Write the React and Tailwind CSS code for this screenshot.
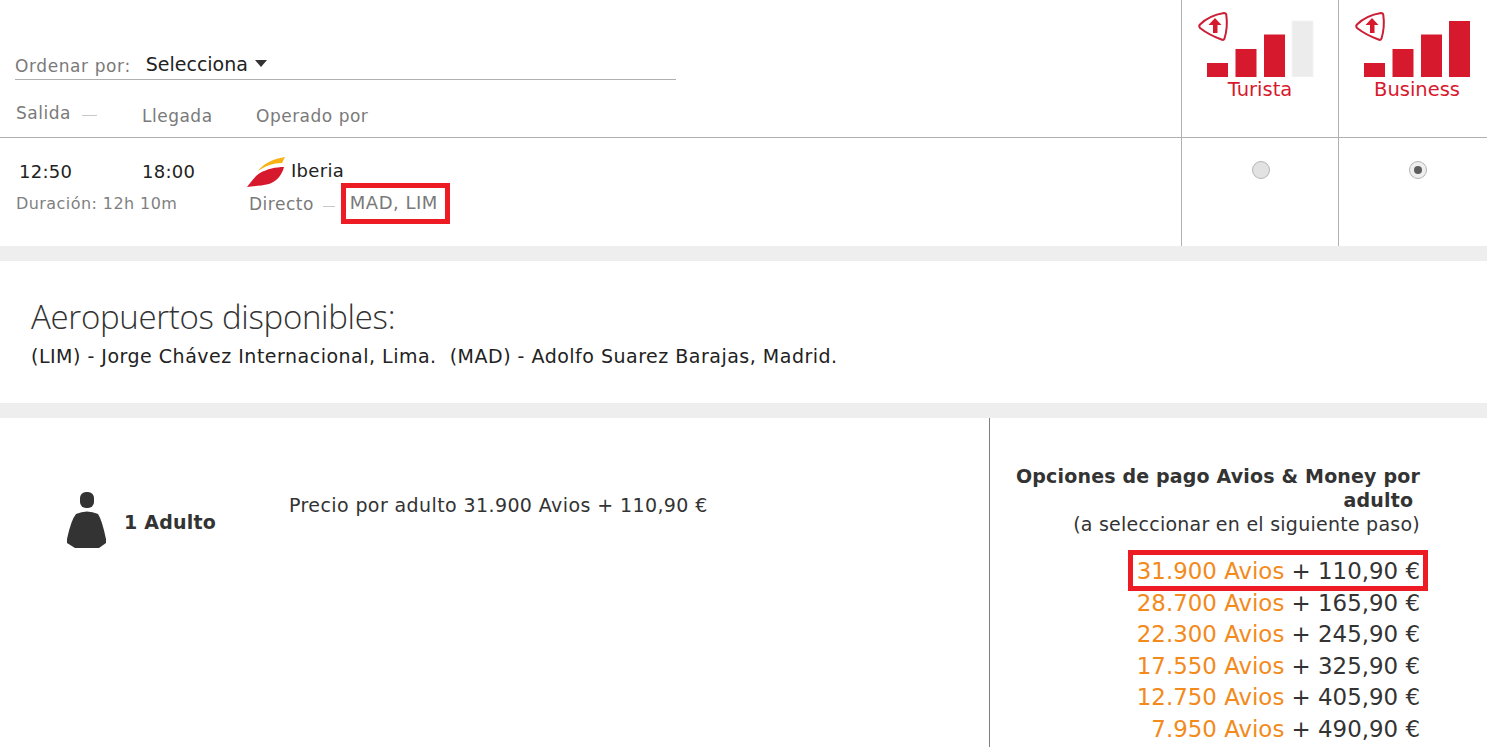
const FONT = "font-['DejaVu_Sans',sans-serif]"

const paymentOptions = [
  { avios: '31.900', money: '110,90', selected: true },
  { avios: '28.700', money: '165,90' },
  { avios: '22.300', money: '245,90' },
  { avios: '17.550', money: '325,90' },
  { avios: '12.750', money: '405,90' },
  { avios: '7.950', money: '490,90' },
]

function CabinIcon({ level }) {
  const bars = [
    { h: 14, x: 10 },
    { h: 28, x: 38.5 },
    { h: 42.5, x: 67 },
    { h: 56, x: 95 },
  ]
  return (
    <svg width="118" height="77" viewBox="0 0 118 77" className="block">
      <path
        d="M3 24.5 Q12 15.5 27 13 Q29 13 29.3 15 Q31 27 27.5 38.5 Q26.5 40.5 24.5 39.5 Q12 35 3 28 Q1.5 26 3 24.5 Z"
        fill="none"
        stroke="#cc1f36"
        strokeWidth="2"
      />
      <path d="M18 18 L24.5 25 L20.5 25 L20.5 33 L16 33 L16 25 L11.5 25 Z" fill="#d7192d" />
      {bars.map((b, i) => (
        <rect
          key={b.x}
          x={b.x}
          y={77 - b.h}
          width="21"
          height={b.h}
          fill={i < level ? '#d7192d' : '#ececec'}
          stroke={i < level ? 'none' : '#f3f3f3'}
        />
      ))}
    </svg>
  )
}

function Radio({ checked }) {
  return (
    <span
      className={`flex h-[18px] w-[18px] items-center justify-center rounded-full border border-[#b5b5b5] ${
        checked ? 'bg-[#efefef]' : 'bg-[#e2e2e2]'
      }`}
    >
      {checked && <span className="h-2 w-2 rounded-full bg-[#5e5e5e]" />}
    </span>
  )
}

function IberiaLogo() {
  return (
    <svg width="39" height="30" viewBox="0 0 39 30" className="block">
      <path d="M11 14 C16 7 25 2 38 0 C37 2 36 4 35 6 C26 6 18 9 11 14 Z" fill="#f9b214" />
      <path d="M37 10 C35 18 30 24 22 27 C14 29 6 29 0 30 C4 25 8 19 13 16 C20 12 29 10 37 10 Z" fill="#d7192d" />
    </svg>
  )
}

function PersonIcon() {
  return (
    <svg width="40" height="57" viewBox="0 0 40 57" className="block">
      <rect x="13" y="0" width="14" height="16" rx="6" fill="#333" />
      <path d="M9 22 Q20 17 31 22 Q35 28 39 47 L39 51 L32 56 L8 56 L0 51 L0 47 Q4 28 9 22 Z" fill="#333" />
    </svg>
  )
}

function CabinHead({ name, level, width }) {
  return (
    <div className={`flex shrink-0 flex-col border-l border-[#b0b0b0] pl-[15px] ${width}`}>
      <CabinIcon level={level} />
      <div className="mt-[1px] w-[126px] text-center text-[19.5px] leading-6 text-[#d7192d]">{name}</div>
    </div>
  )
}

export default function App() {
  return (
    <div className={`${FONT} h-[747px] overflow-hidden bg-white text-[#333]`}>
      {/* cabecera de la tabla */}
      <div className="flex h-[138px] border-b border-[#b0b0b0]">
        <div className="min-w-0 flex-1 pl-[15px]">
          <div className="mt-[49px] flex h-[31px] w-[661px] items-start border-b border-[#b0b0b0]">
            <span className="mt-[7px] text-[17px] leading-5 tracking-[0.6px] text-[#7a7a7a]">Ordenar por:</span>
            <span className="ml-[15px] text-[19px] leading-[30px] text-[#222]">Selecciona</span>
            <span className="ml-[7px] mt-[11px] h-0 w-0 border-x-[6px] border-t-[7px] border-x-transparent border-t-[#333]" />
          </div>
          <div className="mt-[26px] flex text-[17px] leading-5 tracking-[0.5px] text-[#7a7a7a]">
            <span className="ml-[1px] flex w-[126px] items-center">
              <span className="-mt-[7px]">Salida</span>
              <span className="-mt-[1px] ml-[11px] h-px w-[15px] bg-[#c8c8c8]" />
            </span>
            <span className="w-[114px]">Llegada</span>
            <span>Operado por</span>
          </div>
        </div>
        <CabinHead name="Turista" level={3} width="w-[157px]" />
        <CabinHead name="Business" level={4} width="w-[149px]" />
      </div>

      {/* vuelo */}
      <div className="flex h-[108px]">
        <div className="min-w-0 flex-1 pl-[16px]">
          <div className="flex">
            <div className="w-[126px] pl-[3px] pt-[24px] text-[18px] leading-5 tracking-[0.3px] text-[#222]">12:50</div>
            <div className="w-[105px] pt-[24px] text-[18px] leading-5 tracking-[0.3px] text-[#222]">18:00</div>
            <div className="flex pt-[19px]">
              <IberiaLogo />
              <span className="ml-[5px] mt-[4px] text-[18px] leading-5 tracking-[0.3px] text-[#222]">Iberia</span>
            </div>
          </div>
          <div className="mt-[2px] flex items-start">
            <span className="mt-[5px] w-[233px] text-[16px] leading-5 tracking-[0.43px] text-[#7f7f7f]">
              Duración: 12h 10m
            </span>
            <span className="mt-[5px] text-[17px] leading-5 tracking-[0.5px] text-[#7a7a7a]">Directo</span>
            <span className="ml-[9px] mt-[17px] h-px w-[12px] bg-[#c8c8c8]" />
            <span className="ml-[6px] -mt-[6px] border-[5px] border-[#ed1c24] pb-[6px] pl-[4px] pr-[7px] pt-[4px] text-[18px] leading-[21px] tracking-[0.5px] text-[#7a7a7a]">
              MAD, LIM
            </span>
          </div>
        </div>
        <div className="flex w-[157px] shrink-0 border-l border-[#b0b0b0] pl-[70px] pt-[23px]">
          <Radio checked={false} />
        </div>
        <div className="flex w-[149px] shrink-0 border-l border-[#b0b0b0] pl-[70px] pt-[23px]">
          <Radio checked />
        </div>
      </div>

      <div className="h-[15px] bg-[#eeeeee]" />

      {/* aeropuertos */}
      <div className="h-[142px] pl-[31px] pt-[34px]">
        <h2 className="font-['Open_Sans',sans-serif] text-[33px] leading-[44px] font-light tracking-[-0.3px] text-[#333]">
          Aeropuertos disponibles:
        </h2>
        <p className="mt-[5px] text-[19px] leading-6 tracking-[0.5px] text-[#222]">
          (LIM) - Jorge Chávez Internacional, Lima. &nbsp;(MAD) - Adolfo Suarez Barajas, Madrid.
        </p>
      </div>

      <div className="h-[15px] bg-[#eeeeee]" />

      {/* precio */}
      <div className="flex h-[329px]">
        <div className="flex w-[989px] shrink-0 items-start">
          <div className="ml-[67px] mr-[17px] mt-[74px]">
            <PersonIcon />
          </div>
          <span className="mt-[92px] w-[165px] text-[19px] leading-6 font-bold tracking-[0.2px] text-[#333]">
            1 Adulto
          </span>
          <span className="mt-[75px] text-[19px] leading-6 tracking-[0.4px] text-[#333]">
            Precio por adulto 31.900 Avios + 110,90 €
          </span>
        </div>
        <div className="flex-1 border-l border-[#7f7f7f] pr-[67px] pt-[46px] text-right text-[19px] leading-6">
          <div className="font-bold tracking-[0.17px] text-[#333]">
            Opciones de pago Avios &amp; Money por <br />
            adulto&nbsp;
          </div>
          <div className="tracking-[0.25px] text-[#333]">(a seleccionar en el siguiente paso)</div>
          <div className="mt-[14px] flex flex-col items-end text-[22.9px] leading-[31.5px]">
            {paymentOptions.map((o) => (
              <div
                key={o.avios}
                className={
                  o.selected
                    ? '-mb-[3.5px] -mr-[8px] w-[300px] border-[5px] border-[#ed1c24] pr-[3px] pt-[1px] text-right leading-[30px]'
                    : ''
                }
              >
                <span className="text-[#f28a1c]">{o.avios} Avios</span>
                <span className="text-[#333]"> + {o.money} €</span>
              </div>
            ))}
          </div>
        </div>
      </div>
    </div>
  )
}
